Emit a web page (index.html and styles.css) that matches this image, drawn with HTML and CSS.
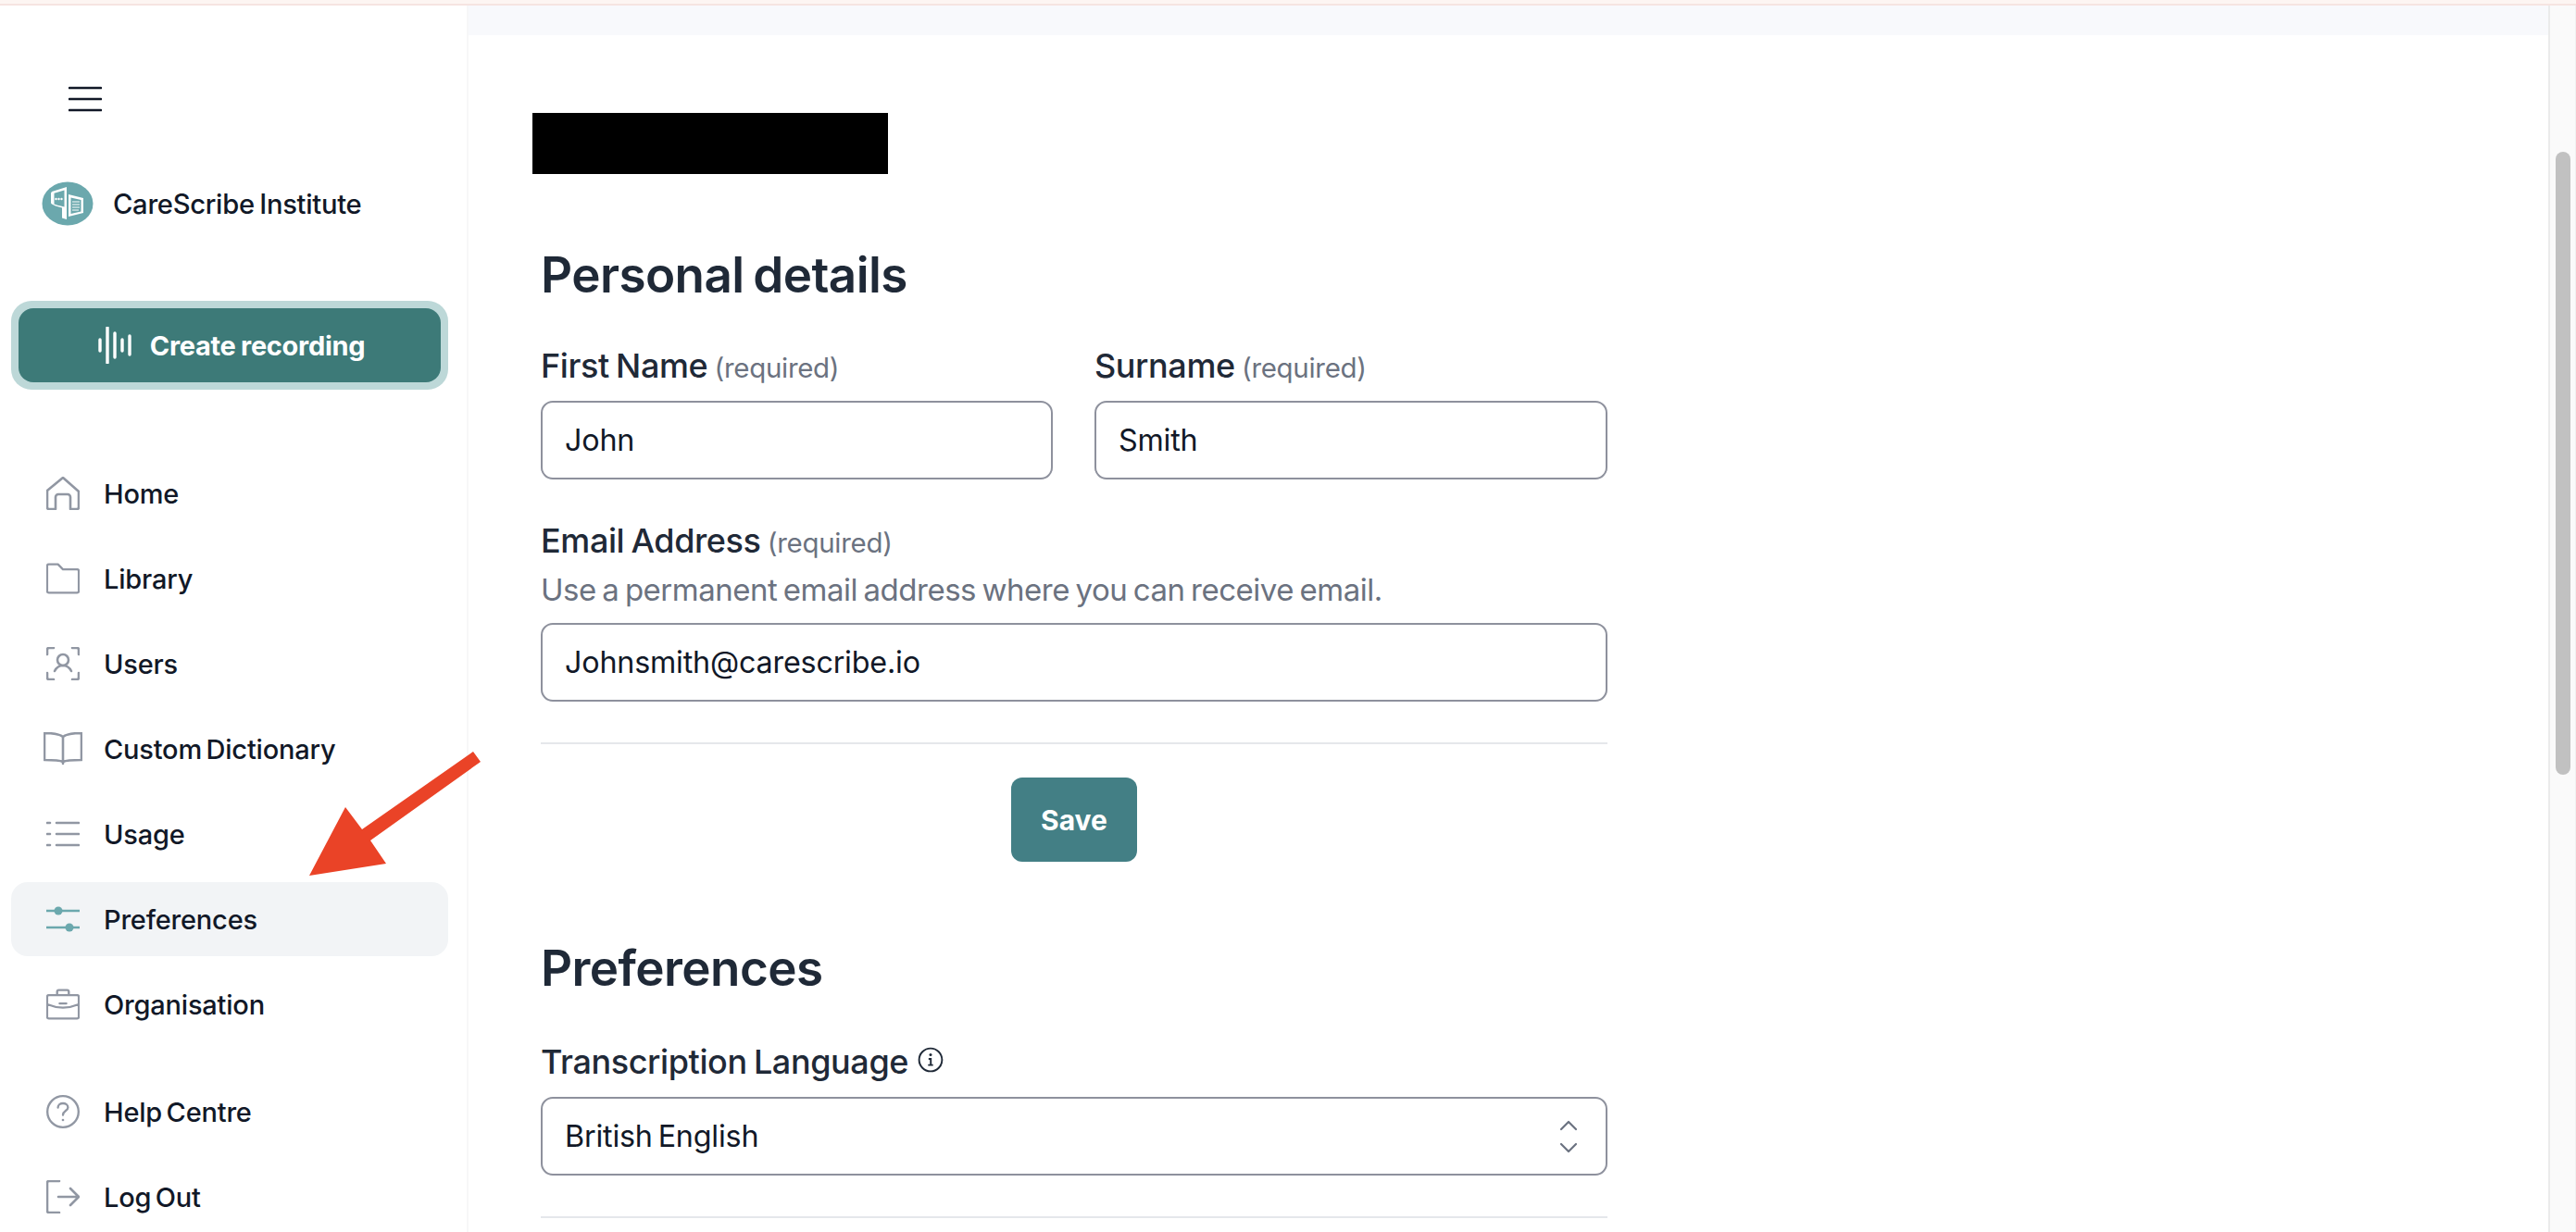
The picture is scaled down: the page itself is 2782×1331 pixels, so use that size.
FILE: index.html
```html
<!DOCTYPE html>
<html lang="en">
<head>
<meta charset="utf-8">
<title>Preferences</title>
<link rel="stylesheet" href="styles.css">
</head>
<body>
<div class="topline"></div>
<div class="app">
  <aside class="sidebar">
    <button class="burger" aria-label="Menu">
      <svg width="36" height="28" viewBox="0 0 36 28"><path d="M1 2h34M1 14h34M1 26h34" fill="none" stroke="#111827" stroke-width="2.6" stroke-linecap="round"/></svg>
    </button>
    <div class="brand">
      <svg class="brand-logo" width="56" height="48" viewBox="0 0 56 48">
        <ellipse cx="28" cy="24" rx="27.5" ry="23.5" fill="#6ba8ad"/>
        <path d="M11 11l16-5v35l-5-1.500v-11l-7-2-4-2a2 2 0 0 1-1-2v-10z" fill="#fff"/>
        <path d="M13.500 12.800l11-3.200v18l-8-2.200-3-1z" fill="#6ba8ad"/>
        <circle cx="15.500" cy="19" r="1.200" fill="#fff"/><circle cx="18.500" cy="19" r="1.200" fill="#fff"/><circle cx="21.500" cy="19" r="1.200" fill="#fff"/>
        <path d="M29 14l16 4v16l-16 4z" fill="#fff"/>
        <path d="M31.500 17.500l11 2.500v12.500l-11 2.500z" fill="#6ba8ad"/>
        <path d="M33 22h8M33 25h8M33 28h8M33 31h7" stroke="#fff" stroke-width="1.200"/>
      </svg>
      <span class="brand-name">CareScribe Institute</span>
    </div>
    <div class="cta-ring">
      <button class="cta">
        <svg width="36" height="40" viewBox="0 0 36 40"><path d="M2 14v12M10 1v38M18 7v26M26 14v12M34 10v20" fill="none" stroke="#fff" stroke-width="3.400" stroke-linecap="round"/></svg>
        <span>Create recording</span>
      </button>
    </div>
    <nav class="nav">
      <a class="nav-item"><svg class="ico" viewBox="0 0 36 36"><path d="M1 15L18 1l17 15v17a2 2 0 0 1-2 2h-7V22a3 3 0 0 0-3-3h-10a3 3 0 0 0-3 3v13H3a2 2 0 0 1-2-2z"/></svg><span>Home</span></a>
      <a class="nav-item"><svg class="ico" viewBox="0 0 40 36"><path d="M1 3a2 2 0 0 1 2-2h11l6 6h17a2 2 0 0 1 2 2v24a2 2 0 0 1-2 2H3a2 2 0 0 1-2-2z"/></svg><span>Library</span></a>
      <a class="nav-item"><svg class="ico" viewBox="0 0 36 36"><path d="M1 8V3a2 2 0 0 1 2-2h5M28 1h5a2 2 0 0 1 2 2v5M35 28v5a2 2 0 0 1-2 2h-5M8 35H3a2 2 0 0 1-2-2v-5"/><circle cx="18" cy="14" r="6"/><path d="M9 26c2-4 5-6 9-6s7 2 9 6"/></svg><span>Users</span></a>
      <a class="nav-item"><svg class="ico ico-wide" viewBox="0 0 42 36"><path d="M21 5C17 2 9 1 1 1v29c8 0 16 0 20 2 4-2 12-2 20-2V1c-8 0-16 1-20 4zM21 5v29"/></svg><span>Custom Dictionary</span></a>
      <a class="nav-item"><svg class="ico" viewBox="0 0 36 28"><path d="M11 2h24M11 14h24M11 26h24M1 2h3M1 14h3M1 26h3"/></svg><span>Usage</span></a>
      <a class="nav-item is-active"><svg class="ico ico-teal" viewBox="0 0 36 28"><path d="M0 5h36M0 23h36"/><circle cx="13" cy="5" r="4.500"/><circle cx="25" cy="23" r="4.500"/></svg><span>Preferences</span></a>
      <a class="nav-item"><svg class="ico" viewBox="0 0 40 36"><path d="M13 7V3a2 2 0 0 1 2-2h10a2 2 0 0 1 2 2v4M1 9a2 2 0 0 1 2-2h34a2 2 0 0 1 2 2v24a2 2 0 0 1-2 2H3a2 2 0 0 1-2-2zM1 18c12 5 26 5 38 0M16 17h8"/></svg><span>Organisation</span></a>
      <div class="nav-spacer"></div>
      <a class="nav-item"><svg class="ico" viewBox="0 0 40 40"><circle cx="20" cy="20" r="18.700"/><path d="M14 15c0-3 3-5 6-5s6 2 6 5c0 4-6 4-6 9"/><circle class="dot" cx="20" cy="30" r="1.500"/></svg><span>Help Centre</span></a>
      <a class="nav-item"><svg class="ico" viewBox="0 0 36 36"><path d="M14 1H3a2 2 0 0 0-2 2v30a2 2 0 0 0 2 2h11M13 18h22M26 9l9 9-9 9"/></svg><span>Log Out</span></a>
    </nav>
  </aside>
  <main class="main">
    <div class="main-strip"></div>
    <div class="content">
      <div class="redacted"></div>
      <h2 class="title title-first">Personal details</h2>
      <div class="two-col">
        <div>
          <div class="label">First Name <small>(required)</small></div>
          <div class="field">John</div>
        </div>
        <div>
          <div class="label">Surname <small>(required)</small></div>
          <div class="field">Smith</div>
        </div>
      </div>
      <div class="label label-email">Email Address <small>(required)</small></div>
      <div class="hint">Use a permanent email address where you can receive email.</div>
      <div class="field field-email">Johnsmith@carescribe.io</div>
      <div class="rule"></div>
      <div class="save-row"><button class="save">Save</button></div>
      <h2 class="title title-second">Preferences</h2>
      <div class="label label-lang">Transcription Language
        <svg class="info" width="28" height="28" viewBox="0 0 26 26"><circle cx="13" cy="13" r="11.500" fill="none" stroke="#1f2937" stroke-width="1.800"/><path d="M11 12h2.200v6M10.500 18.200h5" fill="none" stroke="#1f2937" stroke-width="1.800"/><circle cx="13" cy="8" r="1.400" fill="#1f2937"/></svg>
      </div>
      <div class="field field-select">
        <span>British English</span>
        <svg width="20" height="36" viewBox="0 0 20 36"><path d="M2 10l8-8 8 8M2 26l8 8 8-8" fill="none" stroke="#6b7280" stroke-width="2.200" stroke-linecap="round" stroke-linejoin="round"/></svg>
      </div>
      <div class="rule"></div>
    </div>
  </main>
  <div class="scrollbar"><div class="thumb"></div></div>
</div>
<svg class="arrow" width="200" height="150" viewBox="0 0 200 150"><polygon points="177,0 185,11 66,96 83,121 0,134 39,60 57,84" fill="#ea4327"/></svg>
</body>
</html>
```
FILE: styles.css
```css
* { box-sizing: border-box; }
html, body { margin: 0; height: 100%; overflow: hidden; background: #fff; }
body { font-family: Inter, "Noto Sans", sans-serif; color: #111827; }
.topline { height: 6px; background: #fdf5f2; border-bottom: 2px solid #f6e4e1; }
.app { display: flex; height: 1325px; }

.sidebar { width: 504px; flex: none; padding: 0 20px 0 12px; display: flex; flex-direction: column; }
.burger { display: block; margin: 87px 0 0 62px; padding: 0; width: 36px; height: 28px; border: 0; background: none; }
.burger svg { display: block; }
.brand { display: flex; align-items: center; gap: 21px; margin: 75px 0 0 33px; height: 48px; }
.brand-logo { display: block; flex: none; }
.brand-name { font-size: 29.200px; font-weight: 500; letter-spacing: -0.3px; word-spacing: -2px; }
.cta-ring { margin-top: 81px; padding: 8px; width: 472px; height: 96px; background: #bdd8d8; border-radius: 22px; }
.cta { display: flex; align-items: center; justify-content: center; gap: 20px; width: 100%; height: 80px; padding: 0 0 0 4px; border: 0; border-radius: 16px; background: #3d7a78; color: #fff; font-family: inherit; font-size: 29px; font-weight: 700; letter-spacing: -0.3px; word-spacing: -1px; }
.nav { margin-top: 72px; width: 472px; display: flex; flex-direction: column; gap: 12px; }
.nav-item { display: flex; align-items: center; height: 80px; padding-left: 100px; position: relative; font-size: 29px; font-weight: 450; letter-spacing: -0.2px; word-spacing: -3px; color: #111827; border-radius: 18px; }
.nav-item.is-active { background: #f2f4f6; }
.nav-spacer { height: 12px; }
.ico { position: absolute; left: 38px; top: 22px; width: 36px; height: 36px; fill: none; stroke: #9197a3; stroke-width: 2.600; stroke-linejoin: round; stroke-linecap: round; }
.ico-wide { left: 35px; width: 42px; }
.ico-teal { stroke: #6ba8ad; }
.ico-teal circle { fill: #6ba8ad; stroke: none; }
.ico .dot { fill: #9197a3; stroke: none; }

.main { flex: 1; min-width: 0; border-left: 2px solid #f7f7f8; }
.main-strip { height: 32px; background: #f8f9fc; }
.content { width: 1230px; padding: 0 0 0 78px; }
.redacted { width: 384px; height: 66px; margin: 84px 0 0 -9px; background: #000; }
.title { margin: 0; font-size: 53px; line-height: 60px; font-weight: 600; color: #1f2937; letter-spacing: -0.6px; word-spacing: -3px; }
.title-first { margin-top: 79px; }
.title-second { margin-top: 85px; }
.two-col { display: grid; grid-template-columns: 553px 554px; column-gap: 45px; margin-top: 50px; }
.label { font-size: 36px; line-height: 36px; font-weight: 500; color: #1f2937; letter-spacing: -0.4px; word-spacing: -2px; }
.label small { font-size: 29.500px; font-weight: 400; color: #6b7280; letter-spacing: -0.3px; }
.label-email { margin-top: 48px; }
.label-lang { margin-top: 53px; display: flex; align-items: center; gap: 10px; }
.info { flex: none; margin-top: -4px; }
.hint { margin-top: 15px; font-size: 33px; line-height: 36px; color: #6b7280; letter-spacing: -0.5px; word-spacing: -2.200px; }
.field { display: flex; align-items: center; height: 85px; margin-top: 18px; padding: 0 24px 0 24px; border: 2px solid #8e919d; border-radius: 13px; background: #fff; font-size: 32.300px; color: #111827; letter-spacing: -0.2px; word-spacing: -3px; }
.field-email { margin-top: 18px; }
.field-select { margin-top: 20px; justify-content: space-between; padding-right: 30px; }
.rule { height: 2px; margin-top: 44px; background: #e5e7eb; }
.save-row { display: flex; justify-content: center; margin-top: 36px; }
.save { width: 136px; height: 91px; padding: 0; border: 0; border-radius: 12px; background: #437f85; color: #fff; font-family: inherit; font-size: 30px; font-weight: 700; }

.scrollbar { width: 30px; margin-left: auto; flex: none; background: #fafafa; border-left: 2px solid #ebebeb; border-right: 1px solid #f0f0f0; padding: 158px 0 0 6px; }
.thumb { width: 16px; height: 673px; border-radius: 8px; background: #c1c1c1; }
.arrow { position: absolute; left: 334px; top: 812px; }
```
